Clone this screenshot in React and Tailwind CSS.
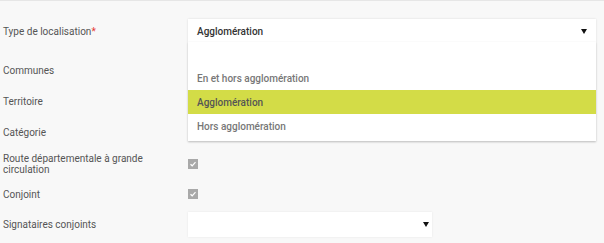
import React from 'react';

const Caret = () => (
    <svg width="6" height="5" viewBox="0 0 6 5" className="shrink-0">
        <path d="M0 0 L6 0 L3 5 Z" fill="#111"/>
    </svg>
);

const Check = () => (
    <div className="w-[10px] h-[10px] bg-[#a9a9a9] flex items-center justify-center">
        <svg width="8" height="8" viewBox="0 0 8 8">
            <path d="M1.5 4.2 L3.2 5.8 L6.5 2.2" stroke="#fff" strokeWidth="1.2" fill="none"/>
        </svg>
    </div>
);

export default function App() {
    const options = ['', 'En et hors agglomération', 'Agglomération', 'Hors agglomération'];

    return (
        <div className="w-[604px] h-[243px] bg-[#f8f8f8] border-t border-[#e6e6e6] overflow-hidden text-[10px] text-[#555]"
             style={{fontFamily: 'Roboto, "Liberation Sans", sans-serif'}}>
            <div className="flex flex-col pl-[3px] pt-[18px]">
                {/* Type de localisation */}
                <div className="flex items-center h-[24px]">
                    <div className="w-[185px]">Type de localisation<span className="text-[#e53935]">*</span></div>
                    <div className="relative w-[408px]">
                        <div className="h-[24px] bg-white flex items-center justify-between pl-[9px] pr-[9px] shadow-[0_0_2px_rgba(0,0,0,0.12)] text-[#333] font-medium">
                            <span>Agglomération</span>
                            <Caret/>
                        </div>
                        <div className="absolute left-0 right-0 top-[23px] bg-white pb-[3px] shadow-[0_1px_2px_rgba(0,0,0,0.25)] z-10">
                            {options.map((o) => (
                                <div key={o}
                                     className={`h-[24px] flex items-center pl-[9px] font-medium ${o === 'Agglomération' ? 'bg-[#d3dc47] text-[#555]' : 'text-[#777]'}`}>
                                    {o}
                                </div>
                            ))}
                        </div>
                    </div>
                </div>

                <div className="flex items-center h-[24px] mt-[15px]">
                    <div className="w-[185px]">Communes</div>
                </div>
                <div className="flex items-center h-[24px] mt-[7px]">
                    <div className="w-[185px]">Territoire</div>
                </div>
                <div className="flex items-center h-[24px] mt-[7px]">
                    <div className="w-[185px]">Catégorie</div>
                </div>
                <div className="flex items-center h-[24px] mt-[8px]">
                    <div className="w-[185px] leading-[11px]">Route départementale à grande<br/>circulation</div>
                    <Check/>
                </div>
                <div className="flex items-center h-[24px] mt-[6px]">
                    <div className="w-[185px]">Conjoint</div>
                    <Check/>
                </div>
                <div className="flex items-center h-[25px] mt-[6px]">
                    <div className="w-[185px]">Signataires conjoints</div>
                    <div className="w-[244px] h-[25px] bg-white flex items-center justify-end pr-[3px] shadow-[0_0_2px_rgba(0,0,0,0.08)]">
                        <Caret/>
                    </div>
                </div>
            </div>
        </div>
    );
}
